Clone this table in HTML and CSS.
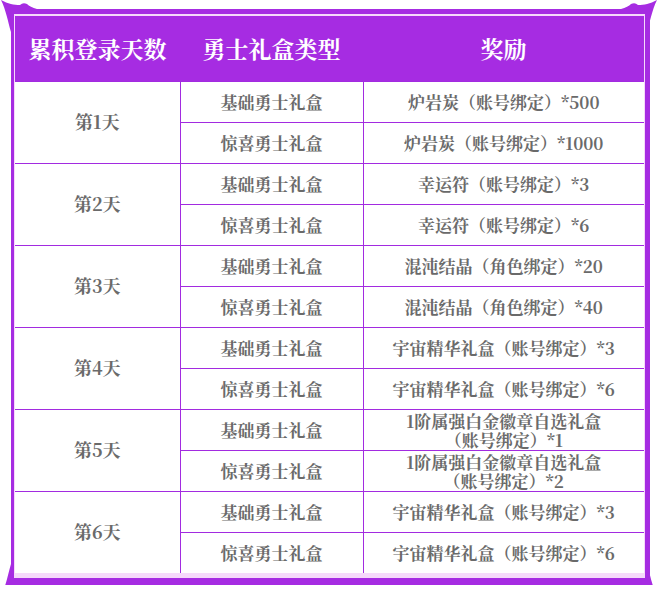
FILE: index.html
```html
<!DOCTYPE html>
<html lang="zh">
<head>
<meta charset="utf-8">
<title>累积登录奖励</title>
<link rel="stylesheet" href="styles.css">
</head>
<body>
<div class="frame">
  <svg class="corner tl" viewBox="0 0 40 40" width="40" height="40"><path d="M0,0 C7,4 13,5 19,5 Q22,2 26,4 Q29,7 36,9 L10,9 L10,32 C7,22 5,10 0,0 Z"/></svg>
  <svg class="corner tr" viewBox="0 0 40 40" width="40" height="40"><path d="M0,0 C7,4 13,5 19,5 Q22,2 26,4 Q29,7 36,9 L10,9 L10,32 C7,22 5,10 0,0 Z"/></svg>
  <svg class="corner bl" viewBox="0 0 40 40" width="40" height="40"><path d="M0,0 C7,4 13,5 19,5 Q22,2 26,4 Q29,7 36,9 L10,9 L10,32 C7,22 5,10 0,0 Z"/></svg>
  <svg class="corner br" viewBox="0 0 40 40" width="40" height="40"><path d="M0,0 C7,4 13,5 19,5 Q22,2 26,4 Q29,7 36,9 L10,9 L10,32 C7,22 5,10 0,0 Z"/></svg>
  <table class="rewards">
    <colgroup><col class="c1"><col class="c2"><col class="c3"></colgroup>
    <thead>
      <tr><th>累积登录天数</th><th>勇士礼盒类型</th><th>奖励</th></tr>
    </thead>
    <tbody>
      <tr><td rowspan="2" class="day">第1天</td><td>基础勇士礼盒</td><td>炉岩炭（账号绑定）*500</td></tr>
      <tr><td>惊喜勇士礼盒</td><td>炉岩炭（账号绑定）*1000</td></tr>
      <tr><td rowspan="2" class="day">第2天</td><td>基础勇士礼盒</td><td>幸运符（账号绑定）*3</td></tr>
      <tr><td>惊喜勇士礼盒</td><td>幸运符（账号绑定）*6</td></tr>
      <tr><td rowspan="2" class="day">第3天</td><td>基础勇士礼盒</td><td>混沌结晶（角色绑定）*20</td></tr>
      <tr><td>惊喜勇士礼盒</td><td>混沌结晶（角色绑定）*40</td></tr>
      <tr><td rowspan="2" class="day">第4天</td><td>基础勇士礼盒</td><td>宇宙精华礼盒（账号绑定）*3</td></tr>
      <tr><td>惊喜勇士礼盒</td><td>宇宙精华礼盒（账号绑定）*6</td></tr>
      <tr><td rowspan="2" class="day">第5天</td><td>基础勇士礼盒</td><td class="two">1阶属强白金徽章自选礼盒<br>（账号绑定）*1</td></tr>
      <tr><td>惊喜勇士礼盒</td><td class="two">1阶属强白金徽章自选礼盒<br>（账号绑定）*2</td></tr>
      <tr><td rowspan="2" class="day">第6天</td><td>基础勇士礼盒</td><td>宇宙精华礼盒（账号绑定）*3</td></tr>
      <tr><td>惊喜勇士礼盒</td><td>宇宙精华礼盒（账号绑定）*6</td></tr>
    </tbody>
  </table>
</div>
</body>
</html>
```

FILE: styles.css
```css
html, body {
  margin: 0;
  padding: 0;
  background: #ffffff;
}

body {
  font-family: "Noto Serif CJK SC", "Liberation Serif", "Noto Sans CJK SC", serif;
}

.frame {
  position: relative;
  width: 629px;
  margin: 9px 0 0 11px;
  border-style: solid;
  border-color: #a62ce2;
  border-width: 5px 5px 7px 3px;
  background: #f6d9fb;
  padding: 2px 1px 5px 1px;
}

.corner {
  position: absolute;
  fill: #a62ce2;
}
.corner.tl { left: -13px; top: -14px; }
.corner.tr { right: -12px; top: -14px; transform: scaleX(-1); }
.corner.bl { left: -13px; bottom: -18px; transform: scaleY(-1); }
.corner.br { right: -12px; bottom: -18px; transform: scale(-1, -1); }

.rewards {
  width: 629px;
  border-collapse: collapse;
  border-style: hidden;
  background: #ffffff;
  table-layout: fixed;
}

.c1 { width: 165px; }
.c2 { width: 183px; }
.c3 { width: 281px; }

.rewards th {
  height: 65px;
  padding: 0;
  background: #a62ce2;
  color: #ffffff;
  font-size: 23px;
  font-weight: bold;
  text-align: center;
  vertical-align: middle;
}

.rewards td {
  height: 38px;
  padding: 0 0 2px;
  border: 1px solid #a22be0;
  color: #6a6a6a;
  font-size: 17px;
  font-weight: bold;
  text-align: center;
  vertical-align: middle;
  line-height: 19px;
}

.rewards td.day {
  font-size: 18px;
}

.rewards td.two {
  font-size: 17px;
  line-height: 19px;
  padding: 0;
}
```
